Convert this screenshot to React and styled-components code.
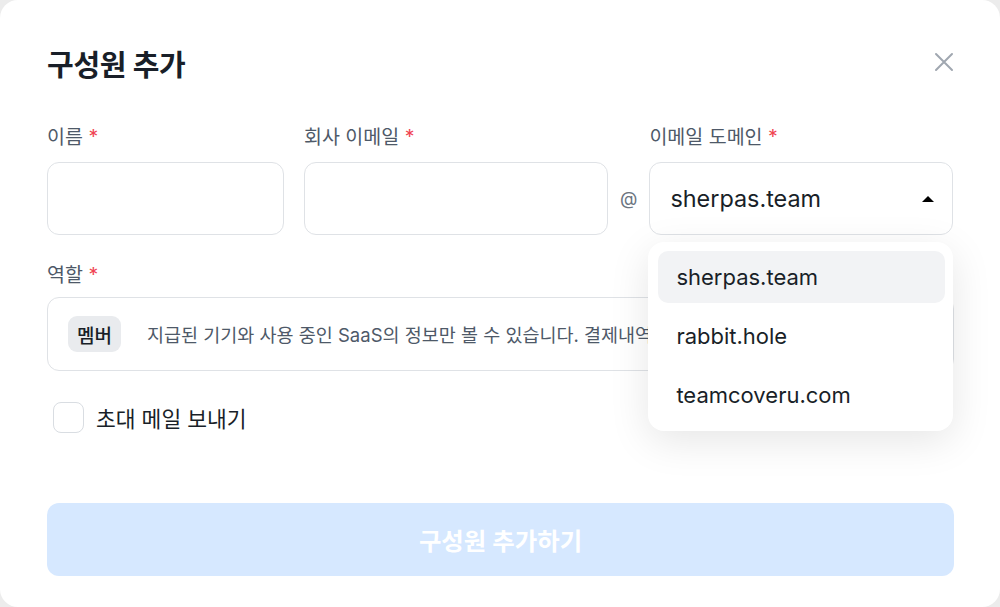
import React from 'react';
import styled, { createGlobalStyle } from 'styled-components';

const GlobalStyle = createGlobalStyle`
  html, body {
    margin: 0;
    padding: 0;
    background: #ececec;
  }
  * {
    box-sizing: border-box;
  }
  body {
    font-family: "Inter", "Noto Sans CJK KR", sans-serif;
  }
`;

const domains = ['sherpas.team', 'rabbit.hole', 'teamcoveru.com'];

const CloseIcon = () => (
  <svg width="20" height="20" viewBox="0 0 20 20" fill="none">
    <path d="M2 2L18 18M18 2L2 18" stroke="#a0a7b0" strokeWidth="2" strokeLinecap="round" />
  </svg>
);

const App = () => {
  return (
    <>
      <GlobalStyle />
      <Modal>
        <Header>
          <Title>구성원 추가</Title>
          <CloseButton aria-label="닫기">
            <CloseIcon />
          </CloseButton>
        </Header>

        <FieldRow>
          <Field $width={237}>
            <Label>이름 <Required>*</Required></Label>
            <Input />
          </Field>
          <Field $width={304}>
            <Label>회사 이메일 <Required>*</Required></Label>
            <Input />
          </Field>
          <At>@</At>
          <Field $width={304}>
            <Label>이메일 도메인 <Required>*</Required></Label>
            <SelectWrap>
              <Select>
                <span>sherpas.team</span>
                <Caret />
              </Select>
              <Menu>
                {domains.map((d, i) => (
                  <MenuItem key={d} $active={i === 0}>{d}</MenuItem>
                ))}
              </Menu>
            </SelectWrap>
          </Field>
        </FieldRow>

        <RoleSection>
          <Label>역할 <Required>*</Required></Label>
          <RoleBox>
            <Chip>멤버</Chip>
            <RoleDesc>지급된 기기와 사용 중인 SaaS의 정보만 볼 수 있습니다. 결제내역은 볼 수 없어요.</RoleDesc>
          </RoleBox>
        </RoleSection>

        <CheckRow>
          <CheckBox />
          <CheckLabel>초대 메일 보내기</CheckLabel>
        </CheckRow>

        <SubmitButton disabled>구성원 추가하기</SubmitButton>
      </Modal>
    </>
  );
};

export default App;

const Modal = styled.div`
  width: 1000px;
  height: 607px;
  background: #fff;
  border-radius: 18px;
  padding: 44px 46px 31px 47px;
  display: flex;
  flex-direction: column;
  overflow: hidden;
`;

const Header = styled.div`
  display: flex;
  align-items: center;
  justify-content: space-between;
  height: 38px;
`;

const Title = styled.h2`
  margin: 0;
  font-size: 29px;
  font-weight: 700;
  color: #191f28;
  letter-spacing: -0.3px;
`;

const CloseButton = styled.button`
  border: none;
  background: none;
  padding: 0;
  margin-bottom: 2px;
  display: flex;
  align-items: center;
  cursor: pointer;
`;

const FieldRow = styled.div`
  display: flex;
  align-items: flex-end;
  gap: 20px;
  margin-top: 43px;
`;

const Field = styled.div`
  width: ${(p) => p.$width}px;
  display: flex;
  flex-direction: column;
  gap: 13px;
`;

const Label = styled.div`
  font-size: 19.5px;
  line-height: 24px;
  color: #4e5968;
`;

const Required = styled.span`
  color: #f04452;
`;

const Input = styled.div`
  height: 73px;
  border: 1px solid #dfe2e6;
  border-radius: 12px;
  background: #fff;
`;

const At = styled.div`
  height: 73px;
  display: flex;
  align-items: center;
  margin: 0 -8px;
  font-size: 18px;
  color: #6b7480;
`;

const SelectWrap = styled.div`
  position: relative;
`;

const Select = styled.div`
  height: 73px;
  border: 1px solid #dfe2e6;
  border-radius: 12px;
  background: #fff;
  display: flex;
  align-items: center;
  justify-content: space-between;
  padding: 0 18px 0 20px;
  font-size: 23.4px;
  color: #191f28;
`;

const Caret = styled.span`
  width: 0;
  height: 0;
  border-left: 6px solid transparent;
  border-right: 6px solid transparent;
  border-bottom: 6px solid #000;
`;

const Menu = styled.div`
  position: absolute;
  top: calc(100% + 7px);
  left: -1px;
  width: 305px;
  background: #fff;
  border-radius: 16px;
  padding: 9px 8px 10px 10px;
  box-shadow: 0 10px 40px rgba(0, 0, 0, 0.1);
  display: flex;
  flex-direction: column;
  gap: 7px;
  z-index: 10;
`;

const MenuItem = styled.div`
  height: 52px;
  border-radius: 10px;
  display: flex;
  align-items: center;
  padding-left: 18px;
  font-size: 22px;
  color: #191f28;
  background: ${(p) => (p.$active ? '#f2f3f5' : 'transparent')};
`;

const RoleSection = styled.div`
  display: flex;
  flex-direction: column;
  gap: 10px;
  margin-top: 28px;
`;

const RoleBox = styled.div`
  height: 74px;
  border: 1px solid #dfe2e6;
  border-radius: 12px;
  display: flex;
  align-items: center;
  padding: 0 20px;
  gap: 26px;
  overflow: hidden;
`;

const Chip = styled.span`
  flex: none;
  height: 36px;
  padding: 0 9px;
  border-radius: 9px;
  background: #e9ebee;
  display: flex;
  align-items: center;
  font-size: 19px;
  font-weight: 500;
  color: #191f28;
`;

/* the open domain menu covers the rest of the line */
const RoleDesc = styled.span`
  max-width: 506px;
  overflow: hidden;
  white-space: nowrap;
  font-size: 18.5px;
  color: #4e5968;
`;

const CheckRow = styled.label`
  display: flex;
  align-items: center;
  gap: 12px;
  margin-top: 31px;
  padding-left: 6px;
`;

const CheckBox = styled.span`
  width: 31px;
  height: 31px;
  border: 1px solid #d9dde2;
  border-radius: 8px;
  background: #fff;
`;

const CheckLabel = styled.span`
  font-size: 21.5px;
  color: #191f28;
`;

const SubmitButton = styled.button`
  margin-top: auto;
  height: 73px;
  width: 100%;
  border: none;
  border-radius: 12px;
  background: #d6e8ff;
  color: #fff;
  font-family: inherit;
  font-size: 24.4px;
  font-weight: 600;
`;
